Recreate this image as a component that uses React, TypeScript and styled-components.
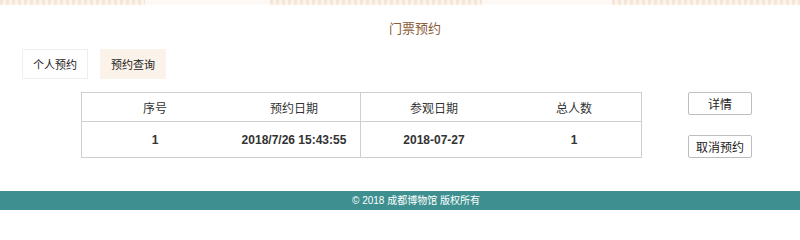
import React from "react";
import styled, { createGlobalStyle } from "styled-components";

const GlobalStyle = createGlobalStyle`
  html, body {
    margin: 0;
    padding: 0;
    background: #fff;
  }
  body {
    font-family: "Liberation Sans", "Noto Sans CJK SC", sans-serif;
    color: #333;
  }
`;

const cjk = `"Liberation Sans", "Noto Sans CJK SC", sans-serif`;

interface Booking {
  id: number;
  bookedAt: string;
  visitDate: string;
  people: number;
}

const bookings: Booking[] = [
  { id: 1, bookedAt: "2018/7/26 15:43:55", visitDate: "2018-07-27", people: 1 },
];

const columns = [
  { label: "序号", width: 146, divider: false },
  { label: "预约日期", width: 132, divider: true },
  { label: "参观日期", width: 146, divider: false },
  { label: "总人数", width: 134, divider: false },
];

export default function App() {
  return (
    <>
      <GlobalStyle />
      <Page>
        <TopStrip />
        <Title>门票预约</Title>
        <Tabs>
          <Tab>个人预约</Tab>
          <Tab active>预约查询</Tab>
        </Tabs>
        <Content>
          <Table>
            <thead>
              <tr>
                {columns.map((c) => (
                  <Th key={c.label} divider={c.divider} style={{ width: c.width }}>
                    {c.label}
                  </Th>
                ))}
              </tr>
            </thead>
            <tbody>
              {bookings.map((b) => (
                <tr key={b.id}>
                  <Td>{b.id}</Td>
                  <Td divider>{b.bookedAt}</Td>
                  <Td>{b.visitDate}</Td>
                  <Td>{b.people}</Td>
                </tr>
              ))}
            </tbody>
          </Table>
          <Actions>
            <ActionButton>详情</ActionButton>
            <ActionButton>取消预约</ActionButton>
          </Actions>
        </Content>
        <Footer>© 2018 成都博物馆 版权所有</Footer>
      </Page>
    </>
  );
}

/*
 * STYLES --------------------------------------------------------------
 */

const Page = styled.div`
  width: 800px;
  height: 236px;
  display: flex;
  flex-direction: column;
  overflow: hidden;
`;

const TopStrip = styled.div`
  height: 6px;
  background:
    linear-gradient(
      90deg,
      transparent 0 145px,
      #fdf8f3 145px 270px,
      transparent 270px 482px,
      #fdf8f3 482px 612px,
      transparent 612px
    ),
    repeating-linear-gradient(90deg, #f6e6d8 0 3px, #fcf3ea 3px 6px);
  -webkit-mask-image: linear-gradient(#000 60%, transparent);
  mask-image: linear-gradient(#000 60%, transparent);
`;

const Title = styled.h2`
  margin: 14px 0 0;
  height: 17px;
  line-height: 17px;
  text-align: center;
  padding-left: 30px;
  font-family: ${cjk};
  font-size: 13px;
  font-weight: normal;
  color: #8b5a36;
`;

const Tabs = styled.div`
  display: flex;
  gap: 12px;
  margin-top: 12px;
  padding-left: 22px;
`;

const Tab = styled.div<{ active?: boolean }>`
  width: 64px;
  height: 28px;
  display: flex;
  align-items: center;
  justify-content: center;
  font-family: ${cjk};
  font-size: 11px;
  color: #222;
  background: ${(p) => (p.active ? "#fbf3ea" : "#fff")};
  border: 1px solid ${(p) => (p.active ? "#fbf3ea" : "#eeeeee")};
`;

const Content = styled.div`
  display: flex;
  align-items: flex-start;
  margin-top: 13px;
  padding-left: 81px;
`;

const Table = styled.table`
  width: 558px;
  border-collapse: collapse;
  table-layout: fixed;
  border: 1px solid #cfcfcf;
  font-size: 12px;
  color: #333;
`;

const Th = styled.th<{ divider?: boolean }>`
  height: 28px;
  padding: 0;
  font-family: ${cjk};
  font-size: 12px;
  font-weight: normal;
  text-align: center;
  border-bottom: 1px solid #cfcfcf;
  border-right: ${(p) => (p.divider ? "1px solid #cfcfcf" : "none")};
`;

const Td = styled.td<{ divider?: boolean }>`
  height: 35px;
  padding: 0;
  text-align: center;
  font-family: "Liberation Sans", sans-serif;
  font-size: 12px;
  font-weight: bold;
  color: #333;
  border-right: ${(p) => (p.divider ? "1px solid #cfcfcf" : "none")};
`;

const Actions = styled.div`
  display: flex;
  flex-direction: column;
  gap: 20px;
  margin-left: 46px;
`;

const ActionButton = styled.button`
  width: 64px;
  height: 23px;
  padding: 0;
  background: #fff;
  border: 1px solid #bdbdbd;
  border-radius: 2px;
  font-family: ${cjk};
  font-size: 12px;
  color: #222;
  cursor: pointer;
`;

const Footer = styled.div`
  margin-top: 33px;
  height: 19px;
  line-height: 19px;
  background: #3e8f90;
  color: #fff;
  text-align: center;
  padding-left: 32px;
  font-family: ${cjk};
  font-size: 10px;
`;
